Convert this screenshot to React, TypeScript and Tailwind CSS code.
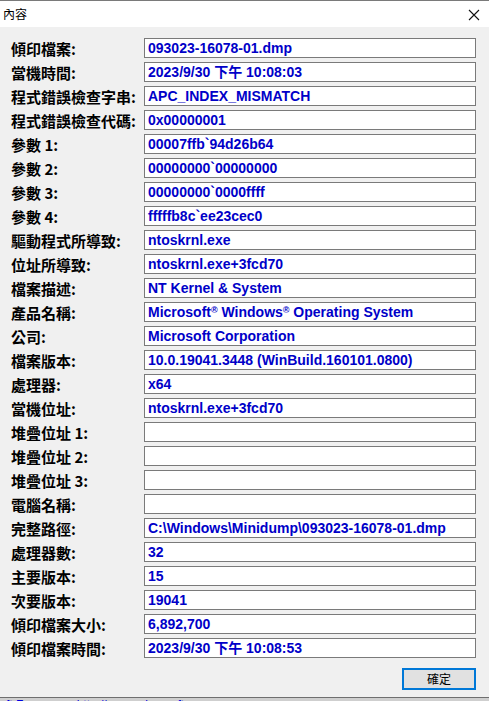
import React from 'react';

const rows: { label: string; value: React.ReactNode }[] = [
  { label: '傾印檔案:', value: '093023-16078-01.dmp' },
  { label: '當機時間:', value: '2023/9/30 下午 10:08:03' },
  { label: '程式錯誤檢查字串:', value: 'APC_INDEX_MISMATCH' },
  { label: '程式錯誤檢查代碼:', value: '0x00000001' },
  { label: '參數 1:', value: '00007ffb`94d26b64' },
  { label: '參數 2:', value: '00000000`00000000' },
  { label: '參數 3:', value: '00000000`0000ffff' },
  { label: '參數 4:', value: 'fffffb8c`ee23cec0' },
  { label: '驅動程式所導致:', value: 'ntoskrnl.exe' },
  { label: '位址所導致:', value: 'ntoskrnl.exe+3fcd70' },
  { label: '檔案描述:', value: 'NT Kernel & System' },
  {
    label: '產品名稱:',
    value: (
      <>
        Microsoft<sup className="text-[9px] -top-[0.4em]">®</sup> Windows<sup className="text-[9px] -top-[0.4em]">®</sup> Operating System
      </>
    ),
  },
  { label: '公司:', value: 'Microsoft Corporation' },
  { label: '檔案版本:', value: '10.0.19041.3448 (WinBuild.160101.0800)' },
  { label: '處理器:', value: 'x64' },
  { label: '當機位址:', value: 'ntoskrnl.exe+3fcd70' },
  { label: '堆疊位址 1:', value: '' },
  { label: '堆疊位址 2:', value: '' },
  { label: '堆疊位址 3:', value: '' },
  { label: '電腦名稱:', value: '' },
  { label: '完整路徑:', value: 'C:\\Windows\\Minidump\\093023-16078-01.dmp' },
  { label: '處理器數:', value: '32' },
  { label: '主要版本:', value: '15' },
  { label: '次要版本:', value: '19041' },
  { label: '傾印檔案大小:', value: '6,892,700' },
  { label: '傾印檔案時間:', value: '2023/9/30 下午 10:08:53' },
];

export default function App() {
  return (
    <div className="w-[489px] h-[701px] overflow-hidden flex flex-col bg-[#f0f0f0] font-['Liberation_Sans','Noto_Sans_CJK_TC',sans-serif]">
      {/* title bar */}
      <div className="border-t border-[#7a7a7a] bg-white h-[27px] flex items-center justify-between pl-[3px] pr-[9px]">
        <span className="text-[12px] text-black font-['Noto_Sans_CJK_TC',sans-serif] leading-none">內容</span>
        <svg width="12" height="12" viewBox="0 0 12 12" className="mt-[1px]">
          <path d="M1 1 L11 11 M11 1 L1 11" stroke="#111" strokeWidth="1.1" fill="none" />
        </svg>
      </div>

      {/* fields */}
      <div className="flex-1 flex flex-col pt-[11px] pl-[11px] pr-[13px]">
        <div className="flex flex-col gap-[4px]">
          {rows.map((r) => (
            <div key={r.label} className="flex items-center h-[20px]">
              <div className="w-[133px] shrink-0 text-[15px] font-bold text-black font-['Noto_Sans_CJK_TC',sans-serif] leading-none whitespace-nowrap">
                {r.label}
              </div>
              <div className="w-[332px] h-[20px] border border-[#7a7a7a] bg-white flex items-center pl-[3px] overflow-hidden">
                <span className="text-[14px] font-bold text-[#0000c8] font-['Liberation_Sans','Noto_Sans_CJK_TC',sans-serif] leading-none whitespace-nowrap">
                  {r.value}
                </span>
              </div>
            </div>
          ))}
        </div>
        <div className="flex justify-end mt-[10px]">
          <button className="w-[74px] h-[22px] border-2 border-[#0078d7] bg-[#e1e1e1] text-[12px] text-black font-['Noto_Sans_CJK_TC',sans-serif] leading-none flex items-center justify-center">
            確定
          </button>
        </div>
      </div>

      {/* window edge and what lies below */}
      <div className="h-[1px] bg-[#6f6f6f]" />
      <div className="h-[3px] bg-[#cfcfcf] overflow-hidden relative">
        <span className="absolute left-[6px] top-[1px] text-[12px] leading-none text-[#0000e0] whitespace-nowrap">
          ft Fo&nbsp;&nbsp;&nbsp;&nbsp;&nbsp;&nbsp;&nbsp;&nbsp;&nbsp;&nbsp;&nbsp;&nbsp;&nbsp;&nbsp;http://www.microsoft.com
        </span>
      </div>
    </div>
  );
}
